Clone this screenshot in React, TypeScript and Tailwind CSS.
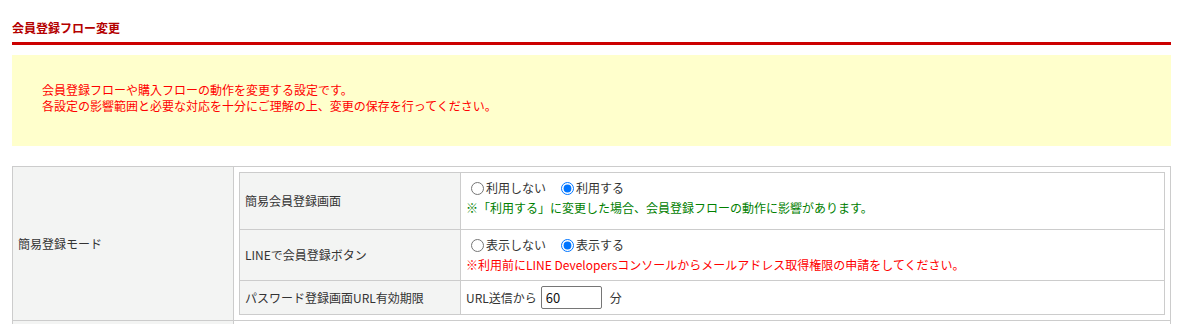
import React from 'react';

const font = { fontFamily: '"Noto Sans CJK JP", "Noto Sans", sans-serif' };

function Radio({ label, checked, name }: { label: string; checked?: boolean; name: string }) {
  return (
    <label className="inline-flex items-center mr-[10px]">
      <input
        type="radio"
        name={name}
        defaultChecked={checked}
        className="ml-[5px] mr-[2px] w-[13px] h-[13px]"
      />
      <span>{label}</span>
    </label>
  );
}

export default function App() {
  return (
    <div className="bg-white text-[12px] text-[#333] pl-[12px] pr-[10px] pb-[20px] w-[1181px]" style={font}>
      {/* Heading */}
      <div className="pt-[20px] pb-[6px] border-b-[3px] border-[#cc0000]">
        <h2 className="font-bold text-[#b40000] leading-[16px]">会員登録フロー変更</h2>
      </div>

      {/* Notice */}
      <div className="mt-[10px] h-[91px] bg-[#ffffcc] pl-[30px] pt-[27px] text-[#ff0000] leading-[16px]">
        <p>会員登録フローや購入フローの動作を変更する設定です。</p>
        <p>各設定の影響範囲と必要な対応を十分にご理解の上、変更の保存を行ってください。</p>
      </div>

      {/* Settings table */}
      <table className="mt-[20px] w-full border-collapse table-fixed">
        <tbody>
          <tr>
            <th className="w-[221px] border border-[#cccccc] bg-[#f3f4f3] px-[5px] text-left font-normal align-middle">
              簡易登録モード
            </th>
            <td className="border border-[#cccccc] p-[5px]">
              <table className="w-full border-collapse table-fixed">
                <tbody>
                  <tr>
                    <th className="w-[221px] h-[57px] border border-[#cccccc] bg-[#f3f4f3] px-[5px] text-left font-normal align-middle">
                      簡易会員登録画面
                    </th>
                    <td className="border border-[#cccccc] px-[5px] pt-[5px] pb-[11px] align-top leading-[20px]">
                      <div className="flex items-center h-[20px]">
                        <Radio name="simple" label="利用しない" />
                        <Radio name="simple" label="利用する" checked />
                      </div>
                      <p className="text-[#008000]">※「利用する」に変更した場合、会員登録フローの動作に影響があります。</p>
                    </td>
                  </tr>
                  <tr>
                    <th className="border border-[#cccccc] bg-[#f3f4f3] px-[5px] text-left font-normal align-middle">
                      LINEで会員登録ボタン
                    </th>
                    <td className="border border-[#cccccc] p-[5px] align-top leading-[20px]">
                      <div className="flex items-center h-[20px]">
                        <Radio name="line" label="表示しない" />
                        <Radio name="line" label="表示する" checked />
                      </div>
                      <p className="text-[#ff0000]">
                        ※利用前にLINE Developersコンソールからメールアドレス取得権限の申請をしてください。
                      </p>
                    </td>
                  </tr>
                  <tr>
                    <th className="border border-[#cccccc] bg-[#f3f4f3] px-[5px] text-left font-normal align-middle">
                      パスワード登録画面URL有効期限
                    </th>
                    <td className="border border-[#cccccc] p-[5px] align-middle">
                      <div className="flex items-center">
                        <span>URL送信から</span>
                        <input
                          type="text"
                          defaultValue="60"
                          className="ml-[4px] w-[61px] h-[23px] border border-[#767676] rounded-[2px] px-[4px] text-[13px] text-[#111]"
                        />
                        <span className="ml-[8px]">分</span>
                      </div>
                    </td>
                  </tr>
                </tbody>
              </table>
            </td>
          </tr>
          <tr>
            <th className="border border-[#cccccc] bg-[#f3f4f3] h-[40px]"></th>
            <td className="border border-[#cccccc]"></td>
          </tr>
        </tbody>
      </table>
    </div>
  );
}
